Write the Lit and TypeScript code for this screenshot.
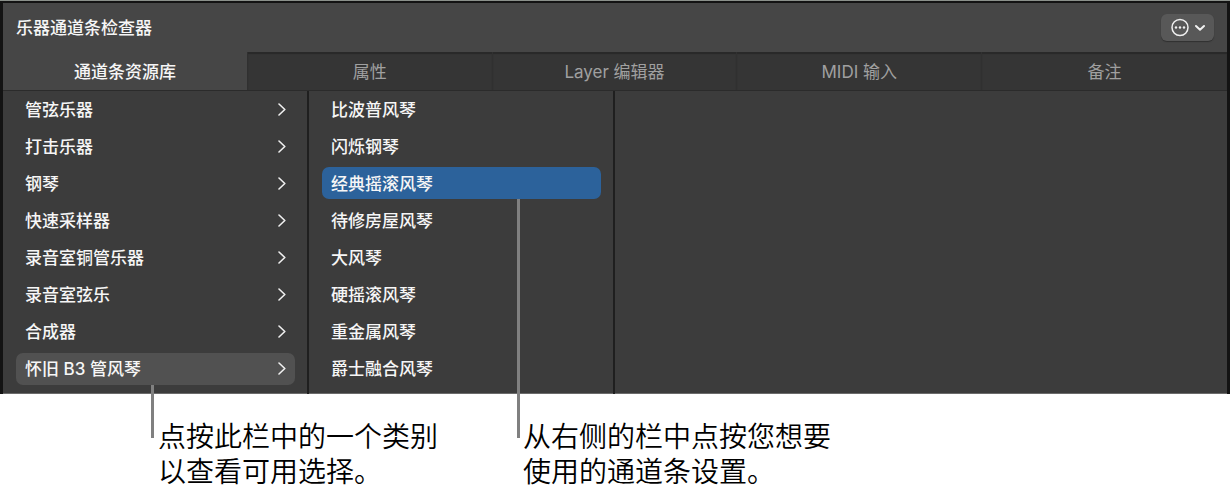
import { LitElement, html, css, nothing } from "lit";
import { customElement, property, state } from "lit/decorators.js";
import { classMap } from "lit/directives/class-map.js";

const TABS = ["通道条资源库", "属性", "Layer 编辑器", "MIDI 输入", "备注"];

const CATEGORIES = [
  "管弦乐器",
  "打击乐器",
  "钢琴",
  "快速采样器",
  "录音室铜管乐器",
  "录音室弦乐",
  "合成器",
  "怀旧 B3 管风琴",
];

const SETTINGS = [
  "比波普风琴",
  "闪烁钢琴",
  "经典摇滚风琴",
  "待修房屋风琴",
  "大风琴",
  "硬摇滚风琴",
  "重金属风琴",
  "爵士融合风琴",
];

@customElement("browser-column")
class BrowserColumn extends LitElement {
  @property({ attribute: false }) items: string[] = [];
  @property({ type: Number }) selected = -1;
  @property({ type: Number }) marked = -1;
  @property() label = "";
  @property({ type: Boolean }) branches = false;

  static styles = css`
    :host {
      display: block;
    }
    .list {
      display: flex;
      flex-direction: column;
      justify-content: space-between;
      box-sizing: border-box;
      min-height: 303px;
      margin: 0;
      padding: 2px 12px 9px 13px;
      list-style: none;
    }
    .item {
      position: relative;
    }
    .row {
      display: flex;
      align-items: center;
      justify-content: space-between;
      box-sizing: border-box;
      width: 100%;
      height: 32px;
      padding: 1px 8px 0 9px;
      border: 0;
      border-radius: 7px;
      background: none;
      color: #f6f6f6;
      font: inherit;
      text-align: left;
    }
    .active {
      background: #2c629b;
    }
    .branch.active {
      background: #515151;
    }
    .chevron {
      width: 10px;
      height: 14px;
      fill: none;
      stroke: #f0f0f0;
      stroke-width: 1.6;
      stroke-linecap: round;
      stroke-linejoin: round;
    }
    .leader {
      position: absolute;
      z-index: 1;
      top: 100%;
      width: 3px;
      background: #808080;
    }
    .near {
      left: 135px;
      height: 53px;
    }
    .far {
      left: 195px;
      height: 239px;
    }
  `;

  private pick(index: number) {
    this.selected = index;
  }

  render() {
    return html`
      <ul class="list" aria-label=${this.label}>
        ${this.items.map(
          (name, i) => html`
            <li class="item">
              <button
                type="button"
                class=${classMap({
                  row: true,
                  branch: this.branches,
                  active: i === this.selected,
                })}
                aria-pressed=${i === this.selected}
                @click=${() => this.pick(i)}
              >
                <span>${name}</span>
                ${this.branches
                  ? html`<svg class="chevron" viewBox="0 0 10 14" aria-hidden="true">
                      <path d="M2 1 L7.8 6.5 L2 12" />
                    </svg>`
                  : nothing}
              </button>
              ${i === this.marked
                ? html`<span
                    class=${classMap({ leader: true, near: this.branches, far: !this.branches })}
                  ></span>`
                : nothing}
            </li>
          `
        )}
      </ul>
    `;
  }
}

@customElement("app-root")
class AppRoot extends LitElement {
  @state() private tab = 0;

  static styles = css`
    :host {
      display: block;
      background: #fff;
      font-family: "Inter", "Noto Sans CJK SC", sans-serif;
      font-size: 17px;
      font-weight: 500;
      line-height: 24px;
    }
    .panel {
      margin-right: 2px;
      border: solid #131313;
      border-width: 2px 3px 0 3px;
      box-shadow: inset 0 -1px #6b6b6b;
      background: #3c3c3c;
    }
    .edge {
      height: 1px;
      margin-right: 2px;
      background: #8b908b;
    }
    .header {
      display: flex;
      align-items: center;
      justify-content: space-between;
      height: 49px;
      padding: 0 13px;
      background: #464646;
    }
    .title {
      margin: 0;
      padding-top: 1px;
      color: #f6f6f6;
      font: inherit;
    }
    .more {
      display: flex;
      align-items: center;
      justify-content: center;
      width: 53px;
      height: 27px;
      padding: 0;
      border: 0;
      border-radius: 6px;
      background: #585858;
      box-shadow: 0 1px 1px #303030;
    }
    .glyph {
      width: 34px;
      height: 19px;
      fill: none;
      stroke: #f0f0f0;
      stroke-linecap: round;
      stroke-linejoin: round;
    }
    .dot {
      fill: #f0f0f0;
      stroke: none;
    }
    .tabs {
      display: grid;
      grid-template-columns: repeat(5, 1fr);
      height: 39px;
      background: #464646;
      border-bottom: 1px solid #2b2b2b;
      box-sizing: border-box;
    }
    .tab {
      padding: 1px 0 0;
      border: 0;
      border-right: 1px solid #303030;
      background: #353535;
      box-shadow: inset 0 2px 1px #292929;
      color: #a0a0a0;
      font: inherit;
      font-weight: 400;
    }
    .tab:last-child {
      border-right: 0;
    }
    .current {
      border-color: #303030;
      background: #464646;
      box-shadow: none;
      color: #f6f6f6;
      font-weight: 500;
    }
    .browser {
      display: grid;
      grid-template-columns: 306px 306px 1fr;
    }
    .column {
      border-right: 2px solid #1f1f1f;
    }
    .notes {
      display: grid;
      grid-template-columns: 365px 1fr;
      padding: 26px 0 0 158px;
      color: #000;
      font-size: 28px;
      font-weight: 350;
      line-height: 35px;
    }
    .note {
      margin: 0;
    }
  `;

  render() {
    return html`
      <div class="edge"></div>
      <section class="panel">
        <header class="header">
          <h1 class="title">乐器通道条检查器</h1>
          <button class="more" type="button" aria-label="更多">
            <svg class="glyph" viewBox="0 0 34 19" aria-hidden="true">
              <circle cx="9" cy="9.5" r="8" stroke-width="1.5" />
              <circle class="dot" cx="5" cy="9.5" r="1.2" />
              <circle class="dot" cx="9" cy="9.5" r="1.2" />
              <circle class="dot" cx="13" cy="9.5" r="1.2" />
              <path d="M25 8 L29 11.8 L33 8" stroke-width="2" />
            </svg>
          </button>
        </header>
        <nav class="tabs" role="tablist">
          ${TABS.map(
            (name, i) => html`<button
              type="button"
              role="tab"
              class=${classMap({ tab: true, current: i === this.tab })}
              aria-selected=${i === this.tab}
              @click=${() => (this.tab = i)}
            >
              ${name}
            </button>`
          )}
        </nav>
        <div class="browser">
          <browser-column
            class="column"
            label="类别"
            branches
            .items=${CATEGORIES}
            .selected=${7}
            .marked=${7}
          ></browser-column>
          <browser-column
            class="column"
            label="设置"
            .items=${SETTINGS}
            .selected=${2}
            .marked=${2}
          ></browser-column>
        </div>
      </section>
      <div class="notes">
        <p class="note">点按此栏中的一个类别<br />以查看可用选择。</p>
        <p class="note">从右侧的栏中点按您想要<br />使用的通道条设置。</p>
      </div>
    `;
  }
}
